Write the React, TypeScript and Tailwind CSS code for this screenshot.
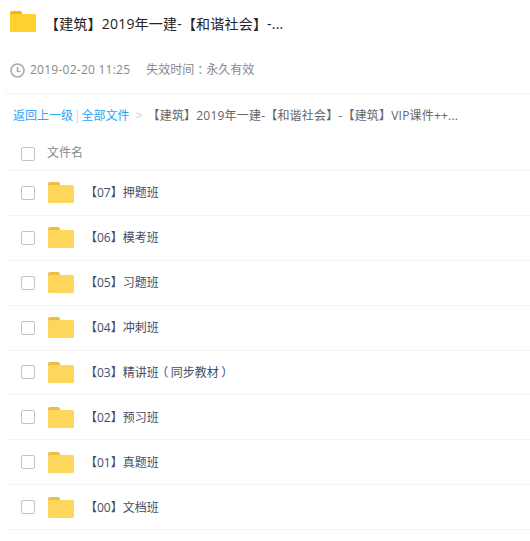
import React from 'react';

const files = [
  '【07】押题班',
  '【06】模考班',
  '【05】习题班',
  '【04】冲刺班',
  '【03】精讲班（同步教材）',
  '【02】预习班',
  '【01】真题班',
  '【00】文档班',
];

// reference font centres this punctuation in its cell
const centered = (text: string) =>
  text.split(/([（）：])/).map((part, i) =>
    /[（）：]/.test(part) ? (
      <span key={i} className="inline-block w-[12px] text-center [font-feature-settings:'palt']">{part}</span>
    ) : (
      part
    )
  );

const FolderIcon = ({ className, tab, body }: { className: string; tab: string; body: string }) => (
  <svg className={className} viewBox="0 0 26 21" fill="none">
    <path d="M0 2a2 2 0 0 1 2-2h8a2 2 0 0 1 2 2v2H0z" fill={tab} />
    <rect x="0" y="3" width="26" height="18" rx="1.5" fill={body} />
  </svg>
);

const Checkbox = () => (
  <div className="w-[14px] h-[14px] rounded-[2px] border border-[#b8c4d2] bg-white shrink-0" />
);

const App: React.FC = () => {
  return (
    <div className="w-[530px] h-[541px] overflow-hidden bg-white font-['Open_Sans','Noto_Sans_CJK_SC',sans-serif]">
      {/* Header */}
      <div className="flex items-center h-[47px] pl-[10px]">
        <FolderIcon className="w-[26px] h-[21px] shrink-0 mb-[4px]" tab="#F0B70F" body="#FFD02F" />
        <h1 className="ml-[9px] mb-[1px] text-[14px] tracking-[0.2px] text-[#222] font-normal">【建筑】2019年一建-【和谐社会】-...</h1>
      </div>

      {/* Meta */}
      <div className="flex items-center h-[46px] pl-[10px] text-[12px] text-[#888]">
        <svg className="w-[15px] h-[15px] shrink-0" viewBox="0 0 15 15" fill="none" stroke="#aaa" strokeWidth="1.6">
          <circle cx="7.5" cy="7.5" r="6.5" />
          <path d="M7.5 4v4.5h3" />
        </svg>
        <span className="ml-[5px] tracking-[0.25px]">2019-02-20 11:25</span>
        <span className="ml-[16px] whitespace-nowrap">{centered('失效时间：永久有效')}</span>
      </div>

      <div className="ml-[5px] border-t border-[#f2f2f2]" />

      {/* Breadcrumb */}
      <div className="flex items-center h-[43px] pl-[13px] text-[12px] whitespace-nowrap">
        <span className="text-[#2aa5f5]">返回上一级</span>
        <span className="mx-[1px] text-[#c5d8e8]">|</span>
        <span className="text-[#2aa5f5]">全部文件</span>
        <span className="ml-[6px] text-[#c4cdd6]">&gt;</span>
        <span className="ml-[5px] tracking-[0.2px] text-[#666]">【建筑】2019年一建-【和谐社会】-【建筑】VIP课件++...</span>
      </div>

      {/* Table */}
      <div className="ml-[5px]">
        <div className="flex items-center h-[34px] border-b border-[#f4f5f7] pl-[16px]">
          <Checkbox />
          <span className="ml-[12px] mb-[1px] text-[12px] text-[#888]">文件名</span>
        </div>
        {files.map(name => (
          <div key={name} className="flex items-center h-[44.875px] border-b border-[#f4f5f7] pl-[16px]">
            <Checkbox />
            <FolderIcon className="ml-[13px] w-[26px] h-[21px] shrink-0" tab="#EDBD45" body="#FFD65C" />
            <span className="ml-[11px] mt-[1px] text-[12px] text-[#424e67] whitespace-nowrap">{centered(name)}</span>
          </div>
        ))}
      </div>
    </div>
  );
};

export default App;
